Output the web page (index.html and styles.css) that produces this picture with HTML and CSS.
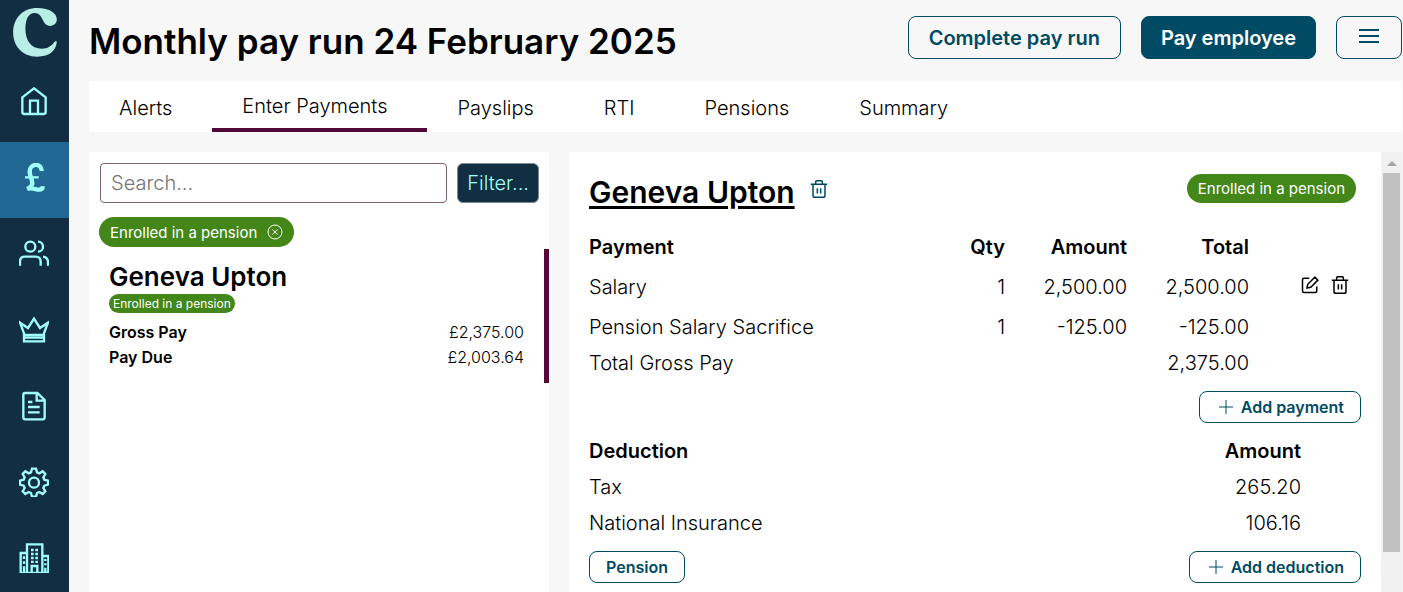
FILE: index.html
```html
<!DOCTYPE html>
<html lang="en">
<head>
<meta charset="utf-8">
<title>Monthly pay run</title>
<link rel="stylesheet" href="styles.css">
</head>
<body>
<svg class="sprite" aria-hidden="true">
  <symbol id="trash" viewBox="0 0 24 24"><path d="M4 6.500v14a2.500 2.500 0 0 0 2.500 2.500h11a2.500 2.500 0 0 0 2.500-2.500v-14M1 5.500h22M7.500 5V2.500A1.500 1.500 0 0 1 9 1h6a1.500 1.500 0 0 1 1.500 1.500V5M9.800 11v7M14.200 11v7"/></symbol>
  <symbol id="edit" viewBox="0 0 24 24"><path d="M11 3H4a2 2 0 0 0-2 2v15a2 2 0 0 0 2 2h15a2 2 0 0 0 2-2v-6M8 16l1-5L18.500 1.500l4 4L13 15z"/></symbol>
  <symbol id="plus" viewBox="0 0 14 14"><path d="M7 0v14M0 7h14"/></symbol>
</svg>
<div class="app">
  <nav class="sidebar" aria-label="Main">
    <a class="logo" href="#" aria-label="Home page">
      <svg viewBox="39 24 132 148"><path d="M171 127C168 158 143 171 112 171C66 171 39 138 39 98C39 55 68 24 112 24C150 24 171 40 171 59C171 70 162 78 151 78C125 78 131 39 104 39C84 39 76 60 76 87C76 122 93 147 125 147C143 147 155 139 164 126C167 124 171 124 171 127Z"/></svg>
    </a>
    <a class="nav-item" href="#" aria-label="Dashboard">
      <svg viewBox="57 258 90 90"><path d="M67 289L102 262L137 289V333Q137 339 131 339H73Q67 339 67 333ZM90 338V299H114V338"/></svg>
    </a>
    <a class="nav-item active" href="#" aria-label="Payroll">
      <svg viewBox="57 488 90 90"><path class="heavy" d="M125 512C126 486 89 489 89 514C89 526 97 537 97 549C97 558 90 562 81 566C96 560 107 568 117 568C125 568 128 565 128 558"/><path d="M75 531H116"/></svg>
    </a>
    <a class="nav-item" href="#" aria-label="Employees">
      <svg viewBox="57 717 90 90"><circle cx="91" cy="740" r="15"/><path d="M60 797V785Q60 770 75 770H107Q122 770 122 785V797M114 725A15 15 0 0 1 114 755M129 770Q144 772 144 787V797"/></svg>
    </a>
    <a class="nav-item" href="#" aria-label="Pensions">
      <svg viewBox="57 75 90 90"><path d="M72 130L60 98L84 114L102 86L120 114L144 98L132 130V154H72ZM72 135H132M74 143H130"/></svg>
    </a>
    <a class="nav-item" href="#" aria-label="Reports">
      <svg viewBox="57 303 90 90"><path d="M75 309H112L134 330V382Q134 388 128 388H76Q70 388 70 382V315Q70 309 75 309ZM110 311V332H132M84 336H97M84 351H119M84 367H119"/></svg>
    </a>
    <a class="nav-item" href="#" aria-label="Settings">
      <svg viewBox="57 532 90 90"><circle cx="102" cy="579" r="15"/><path d="M96 537H108L111 548L118 551L128 545L136 553L130 563L133 570L144 573V585L133 588L130 595L136 605L128 613L118 607L111 610L108 621H96L93 610L86 607L76 613L68 605L74 595L71 588L60 585V573L71 570L74 563L68 553L76 545L86 551L93 548Z"/></svg>
    </a>
    <a class="nav-item" href="#" aria-label="Company">
      <svg viewBox="57 760 90 90"><path d="M81 790H62V850H81ZM81 850V764H127V850M127 799H145V850H127M95 849V829H112V849M72 800V808M72 815V823M72 830V849M136 808V814M136 821V827M136 834V849M81 850H127"/><path class="panes" d="M97 777V820M110 777V820"/></svg>
    </a>
  </nav>
  <main class="main">
    <header class="topbar">
      <h1>Monthly pay run 24 February 2025</h1>
      <button class="btn" type="button">Complete pay run</button>
      <button class="btn primary" type="button">Pay employee</button>
      <button class="btn menu" type="button" aria-label="Menu"><svg viewBox="0 0 20 14"><path d="M0 1h20M0 7h20M0 13h20"/></svg></button>
    </header>
    <nav class="tabs" aria-label="Pay run">
      <a href="#">Alerts</a><a class="current" href="#">Enter Payments</a><a href="#">Payslips</a><a href="#">RTI</a><a href="#">Pensions</a><a href="#">Summary</a>
    </nav>
    <div class="panels">
      <section class="list">
        <div class="search">
          <input type="search" placeholder="Search..." aria-label="Search">
          <button type="button">Filter...</button>
        </div>
        <button class="pill" type="button">Enrolled in a pension <svg viewBox="0 0 16 16"><circle cx="8" cy="8" r="7"/><path d="M5.500 5.500l5 5M10.500 5.500l-5 5"/></svg></button>
        <article class="employee">
          <h2>Geneva Upton</h2>
          <span class="tag">Enrolled in a pension</span>
          <dl>
            <div><dt>Gross Pay</dt><dd>£2,375.00</dd></div>
            <div><dt>Pay Due</dt><dd>£2,003.64</dd></div>
          </dl>
        </article>
      </section>
      <section class="detail">
        <div class="content">
          <div class="person">
            <h2><a href="#">Geneva Upton</a></h2>
            <button class="icon" type="button" aria-label="Remove employee"><svg><use href="#trash"/></svg></button>
            <span class="pill">Enrolled in a pension</span>
          </div>
          <table class="payments">
            <thead><tr><th>Payment</th><th>Qty</th><th>Amount</th><th>Total</th><td></td></tr></thead>
            <tbody>
              <tr class="tall"><td>Salary</td><td>1</td><td>2,500.00</td><td>2,500.00</td><td><div class="actions"><button class="icon" type="button" aria-label="Edit"><svg><use href="#edit"/></svg></button><button class="icon" type="button" aria-label="Delete"><svg><use href="#trash"/></svg></button></div></td></tr>
              <tr><td>Pension Salary Sacrifice</td><td>1</td><td>-125.00</td><td>-125.00</td><td></td></tr>
              <tr><td>Total Gross Pay</td><td></td><td></td><td>2,375.00</td><td></td></tr>
            </tbody>
          </table>
          <div class="row-actions">
            <button class="btn small add" type="button"><svg><use href="#plus"/></svg>Add payment</button>
          </div>
          <table class="deductions">
            <thead><tr><th>Deduction</th><th>Amount</th></tr></thead>
            <tbody>
              <tr><td>Tax</td><td>265.20</td></tr>
              <tr><td>National Insurance</td><td>106.16</td></tr>
            </tbody>
          </table>
          <div class="row-actions">
            <button class="btn small" type="button">Pension</button>
            <button class="btn small add" type="button"><svg><use href="#plus"/></svg>Add deduction</button>
          </div>
        </div>
        <div class="scrollbar" aria-hidden="true"><div class="arrow"></div><div class="thumb"></div></div>
      </section>
    </div>
  </main>
</div>
</body>
</html>
```
FILE: styles.css
```css
* { box-sizing: border-box; }
body {
  margin: 0;
  background: #f7f7f7;
  color: #000;
  font-family: Inter, "Open Sans", sans-serif;
  font-size: 20px;
  font-weight: 300;
}
h1, h2, dl, dd { margin: 0; }
a { color: inherit; text-decoration: none; }
button, input { font: inherit; }
button { cursor: pointer; }
svg { fill: none; stroke: currentColor; }
.sprite { display: none; }

.app { display: flex; height: 100vh; overflow: hidden; }

.sidebar {
  flex: 0 0 69px;
  overflow: hidden;
  background: #112e42;
  color: #a0fffa;
}
.logo { display: block; height: 66px; padding: 8px 0 0 13px; }
.logo svg { display: block; width: 44px; height: 49px; fill: #b8eee6; stroke: none; }
.nav-item {
  display: flex;
  align-items: center;
  justify-content: center;
  height: 76px;
  padding: 0 1px 4px 0;
}
.nav-item.active { background: #226894; }
.nav-item svg { width: 30px; height: 30px; stroke-width: 7; }
.nav-item .heavy { stroke-width: 13; }
.nav-item .panes { stroke-width: 8; stroke-dasharray: 8 4; }

.main {
  display: flex;
  flex: 1;
  flex-direction: column;
  min-width: 0;
  padding: 0 1px 0 20px;
}
.topbar { display: flex; align-items: flex-start; gap: 20px; padding: 16px 0 15px; }
.topbar h1 { flex: 1; font-size: 35px; font-weight: 600; line-height: 50px; white-space: nowrap; }

.btn {
  height: 43px;
  padding: 0 20px;
  border: 1px solid #004b64;
  border-radius: 8px;
  background: transparent;
  color: #004b64;
  font-size: 20px;
  font-weight: 600;
  white-space: nowrap;
}
.btn.primary { padding: 0 19px; background: #004b64; color: #fff; }
.btn.menu { padding: 0 22px 4px; }
.btn.menu svg { display: block; width: 20px; height: 14px; stroke-width: 2; }
.btn.small { height: 32px; padding: 0 16px; background: #fff; font-size: 16px; }
.btn.add { display: flex; align-items: center; gap: 8px; padding-left: 19px; }
.btn.add svg { width: 14px; height: 14px; }

.tabs { display: flex; background: #fff; }
.tabs a {
  height: 51px;
  padding: 0 40px 0 30px;
  line-height: 55px;
}
.tabs .current {
  border-bottom: 4px solid #520938;
  line-height: 51px;
}

.panels {
  display: grid;
  flex: 1;
  grid-template-columns: 460fr 833fr;
  gap: 20px;
  min-height: 0;
  padding-top: 20px;
}
.list { background: #fff; padding-top: 11px; }
.search { display: flex; gap: 10px; padding: 0 10px 0 11px; }
.search input {
  flex: 1;
  min-width: 0;
  height: 40px;
  padding: 0 10px;
  border: 1px solid #7b616f;
  border-radius: 4px;
  background: #fff;
}
.search input::placeholder { color: #757575; }
.search button {
  height: 40px;
  padding: 0 9px;
  border: 1px solid #7d8b94;
  border-radius: 6px;
  background: #112e42;
  color: #a0fffa;
}
.pill {
  display: inline-flex;
  align-items: center;
  gap: 10px;
  height: 29px;
  padding: 0 11px;
  border: 0;
  border-radius: 15px;
  background: #438719;
  color: #fff;
  font-size: 15px;
  font-weight: 400;
  white-space: nowrap;
}
.pill svg { width: 16px; height: 16px; }
.list .pill { height: 30px; margin: 14px 10px 2px; }
.employee { padding: 12px 20px; border-right: 5px solid #520938; }
.employee h2 { font-size: 26px; font-weight: 600; line-height: 32px; }
.tag {
  display: block;
  width: max-content;
  margin-top: 1px;
  padding: 0 4px;
  border-radius: 10px;
  background: #438719;
  color: #fff;
  font-size: 12px;
  font-weight: 400;
  line-height: 19px;
}
.employee dl { padding: 7px 0 1px; font-size: 16px; line-height: 25px; }
.employee dl div { display: flex; justify-content: space-between; }
.employee dt { font-weight: 600; }

.detail { display: flex; min-width: 0; background: #fff; }
.content { flex: 1; padding: 0 20px; }
.person { display: flex; align-items: center; height: 77px; }
.person h2 { padding-top: 2px; font-size: 30px; font-weight: 600; }
.person h2 a { text-decoration: underline; text-decoration-thickness: 3px; text-underline-offset: 3px; }
.person .pill { margin: 0 5px 4px auto; }
.person .icon { margin: 0 0 3px 15px; color: #004b64; }
.icon { padding: 0; border: 0; background: none; color: #000; }
.icon svg { display: block; width: 18px; height: 18px; stroke-width: 2; }

table { width: 100%; border-collapse: collapse; table-layout: fixed; }
tr { height: 36px; }
th, td { padding: 0; text-align: right; }
th { font-weight: 600; }
th:first-child, td:first-child { text-align: left; }
.tall { height: 44px; }
.payments th:nth-child(2) { width: 94px; }
.payments th:nth-child(3), .payments th:nth-child(4) { width: 122px; }
.payments thead td { width: 112px; }
.actions { display: flex; justify-content: flex-end; gap: 12px; padding: 0 12px 4px 0; }
.deductions tr > :last-child { padding-right: 60px; }
.row-actions { display: flex; justify-content: space-between; padding: 10px 0; }
.row-actions .add { margin-left: auto; }

.scrollbar {
  display: flex;
  flex: 0 0 21px;
  flex-direction: column;
  align-items: center;
  background: #f1f1f1;
}
.arrow {
  margin: 9px 0 7px;
  border: 5px solid transparent;
  border-top-width: 0;
  border-bottom-color: #a3a3a3;
}
.thumb { width: 17px; height: 86%; background: #c1c1c1; }
```
